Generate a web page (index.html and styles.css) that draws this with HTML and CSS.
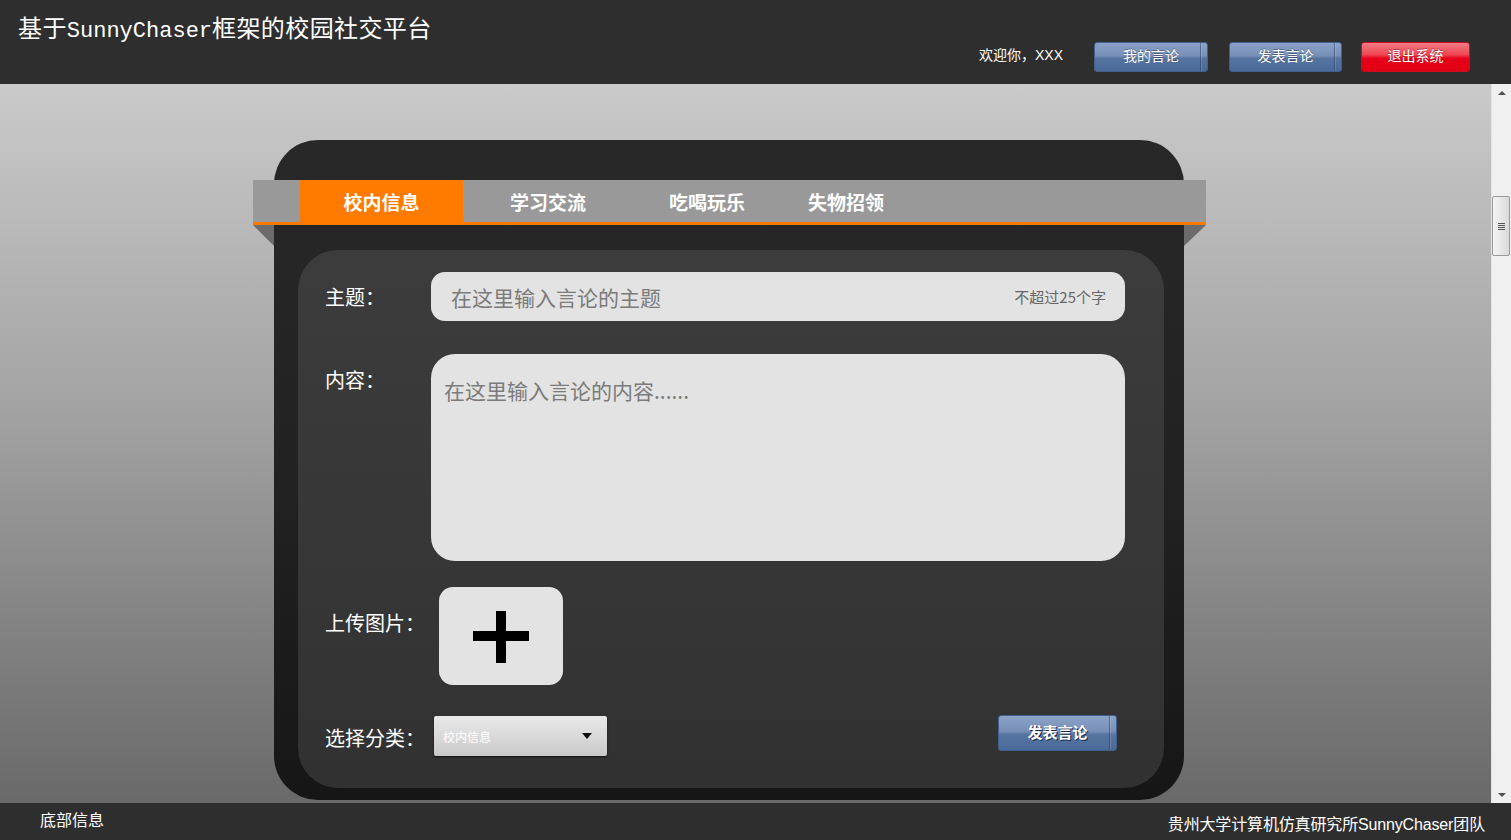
FILE: index.html
```html
<!DOCTYPE html>
<html lang="zh-CN">
<head>
<meta charset="utf-8">
<title>基于SunnyChaser框架的校园社交平台</title>
<link rel="stylesheet" href="styles.css">
</head>
<body>
<header class="topbar">
  <div class="site-title">基于<span class="title-latin">SunnyChaser</span>框架的校园社交平台</div>
  <div class="user-area">
    <span class="welcome">欢迎你，XXX</span>
    <a class="btn btn-blue btn-mine">我的言论</a>
    <a class="btn btn-blue btn-post">发表言论</a>
    <a class="btn btn-red btn-exit">退出系统</a>
  </div>
</header>
<div class="middle">
  <main class="content">
    <section class="board">
      <nav class="tabbar">
        <a class="tab tab-active">校内信息</a>
        <a class="tab tab-study">学习交流</a>
        <a class="tab tab-food">吃喝玩乐</a>
        <a class="tab tab-lost">失物招领</a>
      </nav>
      <div class="form-card">
        <div class="row row-subject">
          <label class="label label-subject">主题：</label>
          <div class="subject-field">
            <input class="subject-input" type="text" placeholder="在这里输入言论的主题">
            <span class="hint">不超过25个字</span>
          </div>
        </div>
        <div class="row row-content">
          <label class="label label-content">内容：</label>
          <textarea class="content-input" placeholder="在这里输入言论的内容......"></textarea>
        </div>
        <div class="row row-upload">
          <label class="label label-upload">上传图片：</label>
          <div class="upload-box">
            <svg class="plus" width="124" height="98" viewBox="0 0 124 98">
              <rect x="34" y="44" width="56" height="10" fill="#000"/>
              <rect x="57" y="24" width="10" height="52" fill="#000"/>
            </svg>
          </div>
        </div>
        <div class="row row-bottom">
          <label class="label label-category">选择分类：</label>
          <div class="select">
            <span class="select-text">校内信息</span>
            <span class="select-arrow"></span>
          </div>
          <a class="btn btn-blue btn-submit">发表言论</a>
        </div>
      </div>
    </section>
  </main>
  <div class="scrollbar">
    <div class="sb-btn"><span class="sb-up"></span></div>
    <div class="sb-track">
      <div class="sb-thumb">
        <span class="grip"></span><span class="grip"></span><span class="grip"></span><span class="grip"></span>
      </div>
    </div>
    <div class="sb-btn"><span class="sb-down"></span></div>
  </div>
</div>
<footer class="footer">
  <span class="footer-left">底部信息</span>
  <span class="footer-right">贵州大学计算机仿真研究所SunnyChaser团队</span>
</footer>
</body>
</html>
```
FILE: styles.css
```css
* { box-sizing: border-box; }

body {
  margin: 0;
  width: 1511px;
  height: 840px;
  overflow: hidden;
  display: flex;
  flex-direction: column;
  font-family: "Noto Sans CJK SC", sans-serif;
  color: #fff;
}

/* ---------- header ---------- */
.topbar {
  height: 84px;
  flex: 0 0 84px;
  background: #2e2e2e;
  display: flex;
  justify-content: space-between;
  align-items: flex-start;
}

.site-title {
  padding: 12px 0 0 18px;
  font-family: "Noto Sans CJK SC", sans-serif;
  font-size: 24px;
  line-height: 30px;
  letter-spacing: 0.4px;
  color: #fff;
  white-space: nowrap;
}

.title-latin {
  font-family: "Liberation Mono", monospace;
  font-size: 22px;
  letter-spacing: 0;
}

.user-area {
  display: flex;
  align-items: flex-start;
  margin: 42px 41px 0 0;
  font-family: "Liberation Sans", "Noto Sans CJK SC", sans-serif;
}

.welcome {
  font-size: 14px;
  line-height: 26px;
  color: #fff;
}

.btn {
  position: relative;
  display: flex;
  align-items: center;
  justify-content: center;
  height: 30px;
  padding-bottom: 5px;
  border-radius: 3px;
  font-size: 14px;
  color: #fff;
  text-shadow: 0 -1px 0 rgba(0, 0, 0, 0.35);
  cursor: pointer;
}

.btn-blue {
  border: 1px solid #41608f;
  background: linear-gradient(to bottom, #8ba3c7 0%, #7890b8 45%, #56749f 55%, #4a6a99 100%);
}

.btn-blue::after {
  content: "";
  position: absolute;
  top: 0;
  bottom: 0;
  right: 6px;
  width: 1px;
  background: rgba(40, 62, 100, 0.55);
  box-shadow: 1px 0 0 rgba(255, 255, 255, 0.15);
}

.btn-red {
  border: 1px solid #c8101e;
  background: linear-gradient(to bottom, #f47a84 0%, #ee4552 42%, #e60018 55%, #e00012 100%);
}

.btn-mine { width: 114px; margin-left: 31px; }
.btn-post { width: 113px; margin-left: 21px; }
.btn-exit { width: 109px; margin-left: 19px; }

/* ---------- middle ---------- */
.middle {
  flex: 1;
  display: flex;
  min-height: 0;
}

.content {
  flex: 1;
  background: linear-gradient(to bottom, #cacaca 0%, #a3a3a3 45%, #696969 100%);
  overflow: hidden;
}

.board {
  width: 910px;
  height: 660px;
  margin: 56px 0 0 274px;
  padding-top: 40px;
  border-radius: 44px;
  background: linear-gradient(to bottom, #282828 0%, #222 50%, #161616 100%);
}

.tabbar {
  position: relative;
  display: flex;
  height: 45px;
  margin: 0 -22px 0 -21px;
  padding-left: 47px;
  background: #999;
  border-bottom: 3px solid #ff7b00;
}

.tabbar::before,
.tabbar::after {
  content: "";
  position: absolute;
  top: 45px;
  width: 0;
  height: 0;
  border-top: 21px solid #6b6b6b;
}

.tabbar::before {
  left: 0;
  border-left: 21px solid transparent;
}

.tabbar::after {
  right: 0;
  border-right: 22px solid transparent;
}

.tab {
  display: block;
  font-size: 19px;
  font-weight: bold;
  line-height: 43px;
  color: #fff;
  white-space: nowrap;
}

.tab-active {
  width: 163px;
  height: 45px;
  margin-bottom: -3px;
  background: #ff7b00;
  text-align: center;
}

.tab-study { margin-left: 47px; }
.tab-food { margin-left: 83px; }
.tab-lost { margin-left: 63px; }

/* ---------- form card ---------- */
.form-card {
  width: 866px;
  height: 538px;
  margin: 25px 0 0 24px;
  padding: 22px 0 0 27px;
  border-radius: 40px;
  background: linear-gradient(to bottom, #3c3c3c 0%, #363636 60%, #313131 100%);
}

.row {
  display: flex;
}

.label {
  flex: 0 0 auto;
  font-size: 20px;
  line-height: 28px;
  color: #fff;
  white-space: nowrap;
}

.row-subject {
  align-items: center;
  height: 49px;
}

.label-subject { width: 106px; }

.subject-field {
  display: flex;
  align-items: center;
  width: 694px;
  height: 49px;
  padding: 0 19px 0 20px;
  border-radius: 14px;
  background: #e3e3e3;
}

.subject-input {
  flex: 1;
  min-width: 0;
  border: 0;
  outline: 0;
  padding: 0;
  background: transparent;
  font-family: "Noto Sans CJK SC", sans-serif;
  font-size: 21px;
  color: #555;
}

.subject-input::placeholder,
.content-input::placeholder {
  color: #7b7b7b;
  opacity: 1;
}

.hint {
  font-size: 15px;
  color: #666;
  white-space: nowrap;
}

.row-content {
  margin-top: 33px;
  align-items: flex-start;
}

.label-content {
  width: 106px;
  padding-top: 12px;
}

.content-input {
  display: block;
  width: 694px;
  height: 207px;
  padding: 21px 13px;
  border: 0;
  outline: 0;
  resize: none;
  border-radius: 24px;
  background: #e3e3e3;
  font-family: "Noto Sans CJK SC", sans-serif;
  font-size: 21px;
  line-height: 30px;
  color: #555;
}

.row-upload {
  margin-top: 26px;
  align-items: flex-start;
}

.label-upload {
  width: 114px;
  padding-top: 22px;
}

.upload-box {
  width: 124px;
  height: 98px;
  border-radius: 14px;
  background: #e3e3e3;
}

.plus { display: block; }

.row-bottom {
  margin-top: 31px;
  align-items: flex-start;
}

.label-category {
  width: 109px;
  padding-top: 8px;
}

.select {
  display: flex;
  align-items: center;
  justify-content: space-between;
  width: 173px;
  height: 40px;
  padding: 0 15px 0 9px;
  border-radius: 2px;
  background: linear-gradient(to bottom, #e9e9e9 0%, #dadada 50%, #c8c8c8 100%);
  box-shadow: 0 1px 2px rgba(0, 0, 0, 0.7);
}

.select-text {
  font-size: 12px;
  color: #fff;
}

.select-arrow {
  width: 0;
  height: 0;
  border-left: 5px solid transparent;
  border-right: 5px solid transparent;
  border-top: 6px solid #111;
}

.btn-submit {
  width: 119px;
  height: 36px;
  margin: -1px 47px 0 auto;
  padding-bottom: 4px;
  font-size: 15px;
  font-weight: bold;
  text-shadow: 1px 1px 0 #1a2a45;
}

/* ---------- fake scrollbar ---------- */
.scrollbar {
  flex: 0 0 20px;
  display: flex;
  flex-direction: column;
  background: #f0f0f0;
  border-left: 1px solid #e4e4e4;
}

.sb-btn {
  height: 17px;
  display: flex;
  align-items: center;
  justify-content: center;
}

.sb-up {
  width: 0;
  height: 0;
  border-left: 4px solid transparent;
  border-right: 4px solid transparent;
  border-bottom: 4px solid #505050;
}

.sb-down {
  width: 0;
  height: 0;
  border-left: 4px solid transparent;
  border-right: 4px solid transparent;
  border-top: 4px solid #505050;
}

.sb-track {
  flex: 1;
}

.sb-thumb {
  width: 18px;
  height: 60px;
  margin-top: 95px;
  border: 1px solid #9a9a9a;
  border-radius: 2px;
  background: linear-gradient(to right, #f4f4f4 0%, #e8e8e8 50%, #d8d8d8 100%);
  display: flex;
  flex-direction: column;
  align-items: center;
  justify-content: center;
  gap: 1px;
}

.grip {
  width: 7px;
  height: 1px;
  background: #555;
}

/* ---------- footer ---------- */
.footer {
  flex: 0 0 37px;
  height: 37px;
  background: #2e2e2e;
  display: flex;
  justify-content: space-between;
  align-items: center;
  padding: 0 26px 0 40px;
  font-family: "Liberation Sans", "Noto Sans CJK SC", sans-serif;
  font-size: 16px;
  color: #fff;
}

.footer-left { margin-top: -5px; }
.footer-right { margin-top: 2px; letter-spacing: -0.15px; }
```
